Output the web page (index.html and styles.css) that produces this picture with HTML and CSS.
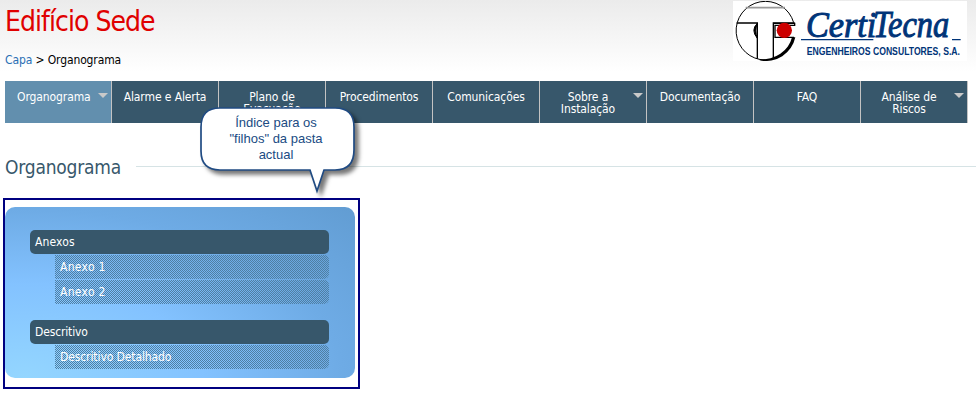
FILE: index.html
```html
<!DOCTYPE html>
<html lang="pt">
<head>
<meta charset="utf-8">
<title>Edifício Sede</title>
<link rel="stylesheet" href="styles.css">
</head>
<body>
<header class="header">
  <div class="heading">
    <h1 class="site-title">Edifício Sede</h1>
    <div class="crumbs"><a class="crumb-link">Capa</a> &gt; <span class="here">Organograma</span></div>
  </div>
  <svg class="logo" viewBox="24 3 702 180">
    <rect x="24" y="3" width="702" height="180" fill="#fff"/>
    <path d="M206 68A88 88 0 1 0 121 180" fill="none" stroke="#000" stroke-width="3"/>
    <path d="M211 112A90 90 0 0 1 104 181L104 178A92 84 0 0 0 201 112Z" fill="#000"/>
    <path d="M62 23H180" stroke="#999" stroke-width="5"/>
    <path d="M35 69H97V176M145 176V69H209" fill="none" stroke="#000" stroke-width="4"/>
    <path d="M144 70H209V76H150V112H207" fill="none" stroke="#000" stroke-width="4"/>
    <path d="M97 70Q76 90 97 115Q88 92 97 70" fill="#000" stroke="#000" stroke-width="3"/>
    <circle cx="178" cy="91" r="23" fill="#c00"/>
    <path d="M228 119H445M681 119H707" stroke="#003478" stroke-width="4"/>
    <text class="brand" x="243" y="112" textLength="211" lengthAdjust="spacingAndGlyphs">Certi</text>
    <text class="brand tall" x="444" y="112" textLength="229" lengthAdjust="spacingAndGlyphs">Tecna</text>
    <text class="tagline" x="245" y="165" textLength="460" lengthAdjust="spacingAndGlyphs">ENGENHEIROS CONSULTORES, S.A.</text>
  </svg>
</header>
<nav class="nav">
  <a class="tab active more">Organograma</a>
  <a class="tab">Alarme e Alerta</a>
  <a class="tab">Plano de Evacuação</a>
  <a class="tab">Procedimentos</a>
  <a class="tab">Comunicações</a>
  <a class="tab more">Sobre a Instalação</a>
  <a class="tab">Documentação</a>
  <a class="tab">FAQ</a>
  <a class="tab more">Análise de Riscos</a>
</nav>
<div class="section"><h2 class="section-title">Organograma</h2><span class="rule"></span></div>
<main class="frame">
  <div class="panel">
    <div class="group">
      <div class="item parent">Anexos</div>
      <div class="item child anexo">Anexo 1</div>
      <div class="item child anexo">Anexo 2</div>
    </div>
    <div class="group">
      <div class="item parent second">Descritivo</div>
      <div class="item child">Descritivo Detalhado</div>
    </div>
  </div>
</main>
<aside class="callout">
  <svg class="bubble" viewBox="0 0 170 100"><path d="M20 7H135Q154 7 154 26V49Q154 69 135 69H124L117 90L110 69H20Q1 69 1 50V26Q1 7 20 7Z" fill="#fff" stroke="#204b83" stroke-width="1.7"/></svg>
  <p class="note">Índice para os<br>"filhos" da pasta<br>actual</p>
</aside>
</body>
</html>
```
FILE: styles.css
```css
* { box-sizing: border-box; }
body {
  margin: 0;
  height: 420px;
  overflow: hidden;
  background: #fff linear-gradient(#ebebeb, #fff 72px) no-repeat;
  font: 12px/12px "DejaVu Sans Condensed", "DejaVu Sans", sans-serif;
  font-stretch: condensed;
  color: #000;
}
.header { display: flex; justify-content: space-between; height: 81px; padding: 1px 9px 0 5px; }
.site-title { margin: 4px 0 0; font-size: 28px; line-height: 33px; font-weight: 400; color: #e00000; letter-spacing: -0.95px; }
.crumbs { margin-top: 15px; line-height: 14px; letter-spacing: -0.12px; }
.crumb-link { color: #2a6fb5; }
.logo { width: 234px; height: 60px; }
.brand { font: italic 106px "Liberation Serif", serif; fill: #003478; stroke: #003478; stroke-width: 3; }
.brand.tall { font-size: 112px; }
.tagline { font: bold 33px "Liberation Sans Narrow", "Liberation Sans", sans-serif; fill: #003478; }
.nav { display: grid; grid-template-columns: repeat(9, minmax(0, 1fr)); width: 963px; height: 42px; margin-left: 5px; letter-spacing: -0.1px; }
.tab { position: relative; padding: 10px 24px 0 14px; border-right: 1px solid #c3c3c3; background: #37576b; color: #fff; text-align: center; }
.tab:not(.more) { padding-left: 10px; padding-right: 10px; }
.tab:nth-child(3) { padding-left: 22px; padding-right: 22px; }
.tab.active { background: #628fae; padding-left: 12px; padding-right: 21px; }
.more::after { content: ""; position: absolute; top: 12px; right: 3px; border: 5px solid transparent; border-top-color: #c9c9c9; border-bottom: 0; }
.section { display: flex; align-items: center; height: 75px; padding: 11px 0 0 5px; }
.section-title { margin: 2px 0 0; font-size: 19px; line-height: 24px; font-weight: 400; color: #37576b; width: 131px; letter-spacing: -0.2px; }
.rule { flex: 1; height: 1px; background: #d6e3e5; }
.frame { width: 357px; height: 191px; margin-left: 3px; padding: 7px 3px 8px 0; border: 2px solid #000080; }
.panel { height: 171px; padding: 23px 26px 0 25px; border-radius: 10px; background: radial-gradient(ellipse 400px 210px at 5% 100%, #94d6ff 0, #83c2ff 45%, #6eabe5 80%, #629dd3 115%); }
.group { margin-bottom: 16px; }
.item { height: 24px; padding: 6px 5px; border-radius: 5px; color: #fff; letter-spacing: -0.1px; }
.parent { background: #37576b; letter-spacing: 0.15px; }
.parent.second { letter-spacing: -0.15px; }
.child { margin: 1px 0 0 25px; border-radius: 0 5px 5px 0; background: url("data:image/svg+xml,%3Csvg xmlns='http://www.w3.org/2000/svg' width='2' height='2' shape-rendering='crispEdges'%3E%3Cpath d='M0 0h1v1H0zM1 1h1v1H1z' fill='%234f7fa3'/%3E%3C/svg%3E"); }
.child.anexo { letter-spacing: 0.3px; }
.callout { position: absolute; left: 200px; top: 101px; width: 170px; height: 100px; }
.bubble { position: absolute; width: 170px; height: 100px; overflow: visible; filter: drop-shadow(4px 4px 2px #0008); }
.note { position: relative; margin: 14px 0 0; width: 152px; text-align: center; font: 13px/16px "Liberation Sans", sans-serif; color: #204b83; }
```
